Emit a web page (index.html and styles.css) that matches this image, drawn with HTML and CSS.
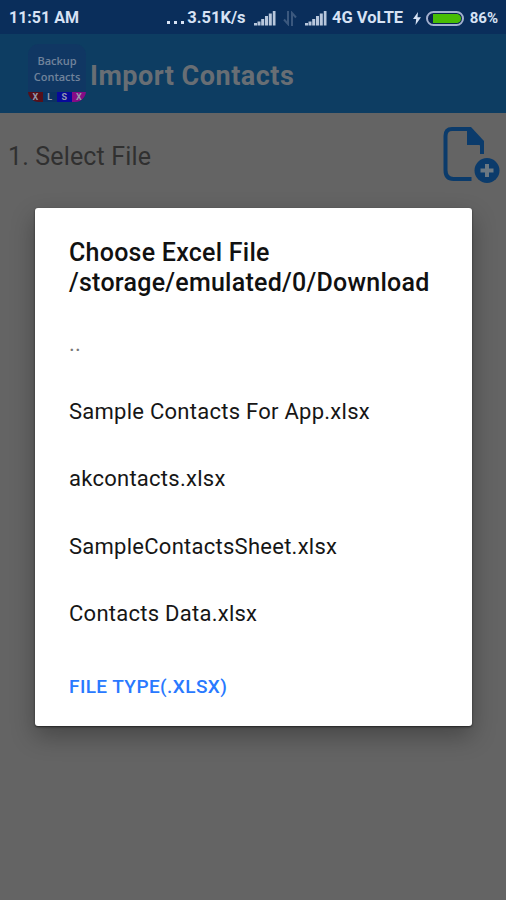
FILE: index.html
```html
<!DOCTYPE html>
<html lang="en">
<head>
<meta charset="utf-8">
<title>Import Contacts</title>
<link rel="stylesheet" href="styles.css">
</head>
<body>
<header class="status">
  <span class="time">11:51 AM</span>
  <span class="dots"><i></i><i></i><i></i></span>
  <span class="speed">3.51K/s</span>
  <svg class="signal" width="22" height="15" viewBox="0 0 22 15"><path d="M0 12h3v2.500H0zM3.500 10.500h3v4h-3zM7.200 8h3v6.500h-3zM11 5h3v9.500h-3zM14.800 2.500h3v12h-3zM18.800 0h2.700v14.500h-2.700z"/></svg>
  <svg class="transfer" width="14" height="15" viewBox="0 0 14 15"><path d="M5 0v13L1 8.500M9 15V2l4 4.500"/></svg>
  <svg class="signal" width="22" height="15" viewBox="0 0 22 15"><path d="M0 12h3v2.500H0zM3.500 10.500h3v4h-3zM7.200 8h3v6.500h-3zM11 5h3v9.500h-3zM14.800 2.500h3v12h-3zM18.800 0h2.700v14.500h-2.700z"/></svg>
  <span class="network">4G VoLTE</span>
  <svg class="bolt" width="8" height="13" viewBox="0 0 8 13"><path d="M5 0 0 7h3.200L2.500 13 8 5.200H4.500z"/></svg>
  <svg class="battery" width="38" height="15" viewBox="0 0 38 15"><rect class="shell" x="1" y="1" width="36" height="13" rx="6.500"/><path class="charge" d="M7 3h24.500q3.500 1 3.500 4.500t-3.500 4.500H7z"/></svg>
  <span class="percent">86%</span>
</header>
<div class="toolbar">
  <div class="logo">
    <div class="logo-name"><span>Backup</span><span>Contacts</span></div>
    <div class="logo-strip"><b class="red">X</b><b class="navy">L</b><b class="blue">S</b><b class="pink">X</b></div>
  </div>
  <h1>Import Contacts</h1>
</div>
<main>
  <div class="step">
    <span>1. Select File</span>
    <svg width="58" height="58" viewBox="0 0 58 58"><path class="outline" d="M40 29V20L26 4H10Q3.500 4 3.500 11v34q0 9 8 9h18"/><path class="fill" d="M25 2h4L42 16v4H25z"/><circle class="fill" cx="45" cy="45.500" r="12.500"/><path class="plus" d="M45 39v13M38.500 45.500h13"/></svg>
  </div>
  <section class="dialog">
    <h2>Choose Excel File<br>/storage/emulated/0/Download</h2>
    <ul>
      <li class="parent">..</li>
      <li>Sample Contacts For App.xlsx</li>
      <li>akcontacts.xlsx</li>
      <li>SampleContactsSheet.xlsx</li>
      <li>Contacts Data.xlsx</li>
    </ul>
    <button>FILE TYPE(.XLSX)</button>
  </section>
</main>
</body>
</html>
```
FILE: styles.css
```css
* { box-sizing: border-box; }
body { margin: 0; height: 900px; overflow: hidden; background: #646464; font-family: Roboto, "Liberation Sans", sans-serif; }
.status { height: 34px; padding: 2px 8px 0 9px; display: flex; align-items: center; background: #0a2e5b; color: #d7e2f4; font-size: 16.500px; font-weight: 700; line-height: 34px; white-space: nowrap; }
.time { width: 159px; font-size: 16px; }
.dots { width: 20px; display: flex; gap: 4px; padding-top: 9px; }
.dots i { width: 3px; height: 3px; background: #d7e2f4; }
.speed { width: 67px; }
.status svg { flex: none; }
.signal { fill: #b8c7dc; }
.transfer { margin: 0 8px 0 7px; fill: none; stroke: #3b587e; stroke-width: 2; }
.network { margin-left: 5px; width: 81px; }
.bolt { fill: #d7e2f4; margin-right: 5px; }
.shell { fill: #0a2451; stroke: #a3b0cf; stroke-width: 2; }
.charge { fill: #48bd04; }
.percent { margin-left: 6px; font-size: 15px; }
.toolbar { height: 79px; padding: 10px 0 0 28px; display: flex; background: #0d3d62; }
.logo { width: 58px; height: 58px; border-radius: 11px; overflow: hidden; background: #103763; color: #70839b; }
.logo-name { height: 48px; padding-top: 9px; display: flex; flex-direction: column; align-items: center; font: 600 11px/16px "Open Sans", sans-serif; }
.logo-strip { height: 10px; display: grid; grid-template-columns: repeat(4, 1fr); font-size: 9px; line-height: 11px; text-align: center; color: #969cad; }
.red { background: #55101a; }
.navy { background: #0b3360; }
.blue { background: #08099a; }
.pink { background: #870b86; }
h1 { margin: 15px 0 0 4px; font-size: 27px; line-height: 34px; font-weight: 700; color: #686e74; letter-spacing: .5px; white-space: nowrap; }
.step { height: 95px; padding: 12px 6px 0 8px; display: flex; justify-content: space-between; color: #303030; font-size: 25px; line-height: 64px; letter-spacing: .15px; }
.outline { fill: none; stroke: #0b3b6b; stroke-width: 4; }
.fill { fill: #0b3b6b; }
.plus { stroke: #6b7882; stroke-width: 4; }
.dialog { width: 437px; height: 518px; margin-left: 35px; padding: 30px 34px 0; background: #fff; border-radius: 3px; box-shadow: 0 1px 2px #222, 0 10px 25px rgba(0,0,0,.3); }
h2 { margin: 0; font-size: 25px; line-height: 29.500px; font-weight: 500; color: #111; letter-spacing: .25px; white-space: nowrap; }
ul { margin: 13px 0 0; padding: 0; list-style: none; }
li { height: 67.500px; font-size: 22px; line-height: 67.500px; letter-spacing: .26px; color: #161616; white-space: nowrap; }
.parent { color: #777; }
button { display: block; margin: 27px 0 0; padding: 0; border: 0; background: none; font: 500 19px/24px Roboto, sans-serif; letter-spacing: .42px; color: #2979ff; white-space: nowrap; }
```
